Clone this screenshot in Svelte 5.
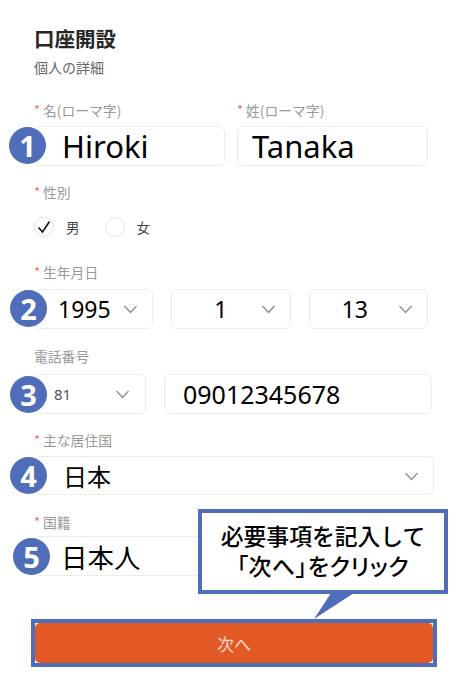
<script>
  const badges = [
    { n: 1, x: 9, y: 127 },
    { n: 2, x: 10, y: 290 },
    { n: 3, x: 10, y: 376 },
    { n: 4, x: 10, y: 457 },
    { n: 5, x: 13, y: 538 }
  ];
</script>

{#snippet chevron()}
  <svg class="chev" width="15" height="9" viewBox="0 0 15 9" aria-hidden="true">
    <path d="M1.5 1 L7.5 7.5 L13.5 1" fill="none" stroke="#8c8c8c" stroke-width="1.3" />
  </svg>
{/snippet}

<div class="page">
  <h1 class="title">口座開設</h1>
  <p class="sub">個人の詳細</p>

  <div class="row row--name">
    <div class="col">
      <div class="label"><span class="req">*</span>名(ローマ字)</div>
      <div class="box box--name">Hiroki</div>
    </div>
    <div class="col">
      <div class="label"><span class="req">*</span>姓(ローマ字)</div>
      <div class="box box--name box--tanaka">Tanaka</div>
    </div>
  </div>

  <div class="label label--gender"><span class="req">*</span>性別</div>
  <div class="radios">
    <span class="radio">
      <svg width="16" height="16" viewBox="0 0 16 16" aria-hidden="true">
        <path d="M2.5 8.5 L6.5 13 L13.5 2.5" fill="none" stroke="#111" stroke-width="1.6" />
      </svg>
    </span>
    <span class="radio-text">男</span>
    <span class="radio radio--second"></span>
    <span class="radio-text">女</span>
  </div>

  <div class="label label--birth"><span class="req">*</span>生年月日</div>
  <div class="row row--birth">
    <div class="box sel sel--year"><span>1995</span>{@render chevron()}</div>
    <div class="box sel sel--month"><span>1</span>{@render chevron()}</div>
    <div class="box sel sel--day"><span>13</span>{@render chevron()}</div>
  </div>

  <div class="label label--phone">電話番号</div>
  <div class="row row--phone">
    <div class="box sel sel--code"><span>81</span>{@render chevron()}</div>
    <div class="box box--tel">09012345678</div>
  </div>

  <div class="label label--res"><span class="req">*</span>主な居住国</div>
  <div class="box sel sel--wide sel--res"><span>日本</span>{@render chevron()}</div>

  <div class="label label--nat"><span class="req">*</span>国籍</div>
  <div class="box sel sel--wide sel--nat"><span>日本人</span>{@render chevron()}</div>

  <div class="next-wrap">
    <button class="next">次へ</button>
  </div>

  {#each badges as b}
    <div class="badge" style="left:{b.x}px;top:{b.y}px">{b.n}</div>
  {/each}

  <div class="callout">必要事項を記入して<br /><span class="tight">「次へ」をクリック</span></div>
  <svg class="tail" width="42" height="27" viewBox="0 0 42 27" aria-hidden="true">
    <path d="M17 0 L40 0 L0 26 Z" fill="#4f6db8" />
  </svg>
</div>

<style>
  :global(body) { background: #fff; }
  .page {
    position: relative; width: 474px; height: 698px; overflow: hidden;
    padding: 25px 40px 0 34px; box-sizing: border-box;
    font-family: "Noto Sans", "Noto Sans CJK JP", sans-serif; color: #000;
  }
  .title {
    margin: 0; font-size: 20.5px; line-height: 26px; font-weight: 700; color: #262626;
    font-family: "Noto Sans CJK JP", sans-serif;
  }
  .sub {
    margin: 6px 0 0; font-size: 14px; line-height: 20px; color: #666;
    font-family: "Noto Sans CJK JP", sans-serif;
  }

  .label {
    font-size: 13.8px; line-height: 18px; color: #999; display: flex; white-space: nowrap;
    font-family: "Noto Sans CJK JP", sans-serif;
  }
  .req { color: #f56c6c; width: 9px; font-size: 13px; }

  .row { display: flex; }
  .row--name { margin-top: 24px; gap: 12px; width: 394px; }
  .col { flex: 1; min-width: 0; }
  .col .label { margin-bottom: 7px; }

  .box {
    box-sizing: border-box; height: 40px; background: #fff;
    border: 1.5px solid #ececef; border-radius: 6px;
    display: flex; align-items: center; font-size: 31px; white-space: nowrap;
  }
  .box--name { padding-left: 27px; }
  .box--tanaka { padding-left: 14px; }

  .label--gender { margin-top: 17px; }
  .radios { display: flex; align-items: center; margin-top: 15px; height: 21px; }
  .radio {
    box-sizing: border-box; width: 20px; height: 20px; border: 1.5px solid #e4e4ec; border-radius: 50%;
    display: flex; align-items: center; justify-content: center;
  }
  .radio--second { margin-left: 25px; }
  .radio-text {
    margin-left: 12px; font-size: 13.5px; line-height: 20px; color: #444;
    font-family: "Noto Sans CJK JP", sans-serif;
  }

  .label--birth { margin-top: 26px; }
  .row--birth { margin-top: 8px; gap: 18px; width: 394px; }
  .sel { position: relative; font-size: 23px; }
  .sel .chev { position: absolute; right: 14px; top: 15px; }
  .sel--year { width: 120px; padding-left: 23px; }
  .sel--month { width: 120px; padding-left: 42px; }
  .sel--day { width: 120px; padding-left: 32px; }

  .label--phone { margin-top: 18px; }
  .row--phone { margin-top: 9px; gap: 18px; }
  .sel--code { width: 112px; padding-left: 19px; font-size: 15px; color: #555; }
  .sel--code .chev { right: 15px; }
  .box--tel { width: 268px; padding-left: 18px; font-size: 25px; }

  .label--res { margin-top: 17px; }
  .sel--wide { width: 400px; }
  .sel--res { margin-top: 7px; height: 39px; padding-left: 28px; font-size: 24px; font-family: "Noto Sans CJK JP", sans-serif; }
  .label--nat { margin-top: 18px; }
  .sel--nat { margin-top: 5px; padding-left: 26px; font-size: 26.5px; font-family: "Noto Sans CJK JP", sans-serif; }

  .next-wrap {
    margin: 43px 0 0 -3px; width: 406px; height: 48px; box-sizing: border-box;
    border: 4px solid #4f6db8; background: #fff;
  }
  .next {
    display: block; width: 100%; height: 100%; border: none; border-radius: 5px; padding: 0;
    background: #e35925; color: #f8dcd0; font-size: 17px;
    font-family: "Noto Sans CJK JP", sans-serif;
  }

  .badge {
    position: absolute; width: 37px; height: 37px; border-radius: 50%;
    background: #4f6db8; color: #fff; font-size: 29px; font-weight: 700; line-height: 37px; text-align: center;
  }

  .callout {
    position: absolute; left: 198px; top: 509px; width: 250px; height: 85px; box-sizing: border-box;
    background: #fff; border: 4px solid #4f6db8; text-align: center;
    font-size: 22.8px; font-weight: 500; line-height: 30px; padding-top: 8px; color: #000; white-space: nowrap;
    font-family: "Noto Sans CJK JP", sans-serif;
  }
  .tight { font-feature-settings: "palt"; letter-spacing: 0.6px; }
  .tail { position: absolute; left: 314px; top: 593px; }
</style>
